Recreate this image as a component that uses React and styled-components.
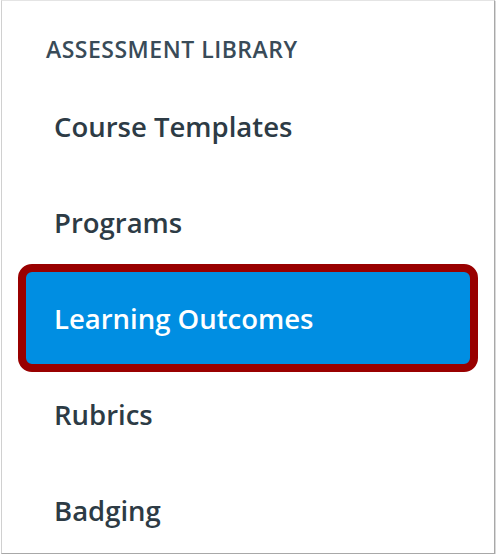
import React from 'react';
import styled, { createGlobalStyle } from 'styled-components';

const GlobalStyle = createGlobalStyle`
  html, body {
    margin: 0;
    padding: 0;
    background: #ffffff;
  }
  body {
    font-family: "Open Sans", Lato, "Liberation Sans", sans-serif;
  }
`;

const Panel = styled.nav`
  box-sizing: border-box;
  width: 494px;
  height: 554px;
  margin-left: 1px;
  background: #ffffff;
  border-top: 1px solid #e4e4e4;
  border-left: 1px solid #d0d0d0;
  border-right: 1px solid #a8a8a8;
  border-bottom: 1px solid #a8a8a8;
  box-shadow: 1px 1px 1px rgba(0, 0, 0, 0.15);
  padding: 34px 16px 0 16px;
  display: flex;
  flex-direction: column;
`;

const Heading = styled.h3`
  margin: 0 0 0 28px;
  font-size: 23px;
  font-weight: 600;
  line-height: 28px;
  letter-spacing: 0.5px;
  color: #394b58;
`;

const List = styled.ul`
  list-style: none;
  margin: 15px 0 0;
  padding: 0;
  display: flex;
  flex-direction: column;
`;

const Item = styled.li`
  box-sizing: border-box;
  width: 460px;
  height: ${p => (p.$active ? '108px' : '96px')};
  margin: ${p => (p.$active ? '-6px 0' : '0')};
  display: flex;
  align-items: center;
  padding-left: 28px;
  font-size: 27.5px;
  font-weight: 600;
  color: ${p => (p.$active ? '#ffffff' : '#2d3b45')};
  background: ${p => (p.$active ? '#008ee2' : 'transparent')};
  border: 8px solid ${p => (p.$active ? '#990000' : 'transparent')};
  border-radius: 14px;
`;

const items = ['Course Templates', 'Programs', 'Learning Outcomes', 'Rubrics', 'Badging'];

export default function App() {
  return (
    <>
      <GlobalStyle />
      <Panel>
        <Heading>ASSESSMENT LIBRARY</Heading>
        <List>
          {items.map(name => (
            <Item key={name} $active={name === 'Learning Outcomes'}>{name}</Item>
          ))}
        </List>
      </Panel>
    </>
  );
}
